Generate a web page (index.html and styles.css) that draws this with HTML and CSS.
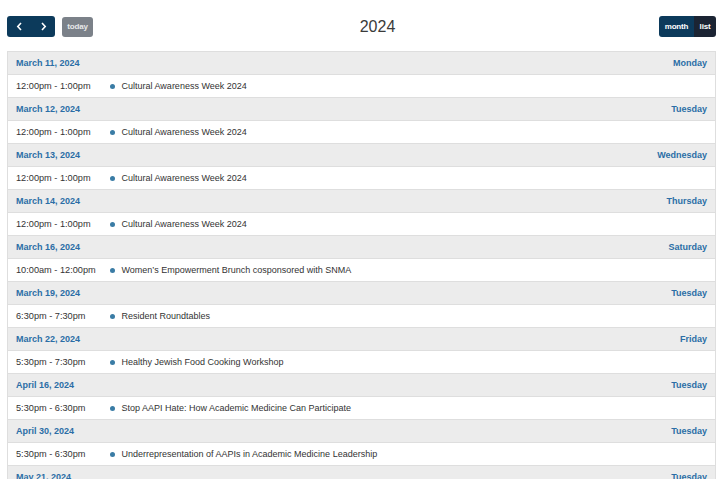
FILE: index.html
```html
<!DOCTYPE html>
<html>
<head>
<meta charset="utf-8">
<link rel="stylesheet" href="styles.css">
</head>
<body>
<div class="cal">
  <div class="toolbar">
    <div class="left">
      <div class="btn-group">
        <button class="btn nav" aria-label="prev"><svg width="7" height="9" viewBox="0 0 7 9"><path d="M5 1 L1.8 4.5 L5 8" fill="none" stroke="#fff" stroke-width="1.6"/></svg></button>
        <button class="btn nav" aria-label="next"><svg width="7" height="9" viewBox="0 0 7 9"><path d="M2 1 L5.2 4.5 L2 8" fill="none" stroke="#fff" stroke-width="1.6"/></svg></button>
      </div>
      <button class="btn today">today</button>
    </div>
    <h2 class="title">2024</h2>
    <div class="right">
      <div class="btn-group">
        <button class="btn view">month</button>
        <button class="btn view active">list</button>
      </div>
    </div>
  </div>
  <table class="list">
    <colgroup><col class="c-time"><col class="c-dot"><col></colgroup>
    <tbody>
      <tr class="day"><td colspan="2">March 11, 2024</td><td class="dow">Monday</td></tr>
      <tr class="ev"><td class="time">12:00pm - 1:00pm</td><td class="dot"><span></span></td><td class="name">Cultural Awareness Week 2024</td></tr>
      <tr class="day"><td colspan="2">March 12, 2024</td><td class="dow">Tuesday</td></tr>
      <tr class="ev"><td class="time">12:00pm - 1:00pm</td><td class="dot"><span></span></td><td class="name">Cultural Awareness Week 2024</td></tr>
      <tr class="day"><td colspan="2">March 13, 2024</td><td class="dow">Wednesday</td></tr>
      <tr class="ev"><td class="time">12:00pm - 1:00pm</td><td class="dot"><span></span></td><td class="name">Cultural Awareness Week 2024</td></tr>
      <tr class="day"><td colspan="2">March 14, 2024</td><td class="dow">Thursday</td></tr>
      <tr class="ev"><td class="time">12:00pm - 1:00pm</td><td class="dot"><span></span></td><td class="name">Cultural Awareness Week 2024</td></tr>
      <tr class="day"><td colspan="2">March 16, 2024</td><td class="dow">Saturday</td></tr>
      <tr class="ev"><td class="time">10:00am - 12:00pm</td><td class="dot"><span></span></td><td class="name">Women’s Empowerment Brunch cosponsored with SNMA</td></tr>
      <tr class="day"><td colspan="2">March 19, 2024</td><td class="dow">Tuesday</td></tr>
      <tr class="ev"><td class="time">6:30pm - 7:30pm</td><td class="dot"><span></span></td><td class="name">Resident Roundtables</td></tr>
      <tr class="day"><td colspan="2">March 22, 2024</td><td class="dow">Friday</td></tr>
      <tr class="ev"><td class="time">5:30pm - 7:30pm</td><td class="dot"><span></span></td><td class="name">Healthy Jewish Food Cooking Workshop</td></tr>
      <tr class="day"><td colspan="2">April 16, 2024</td><td class="dow">Tuesday</td></tr>
      <tr class="ev"><td class="time">5:30pm - 6:30pm</td><td class="dot"><span></span></td><td class="name">Stop AAPI Hate: How Academic Medicine Can Participate</td></tr>
      <tr class="day"><td colspan="2">April 30, 2024</td><td class="dow">Tuesday</td></tr>
      <tr class="ev"><td class="time">5:30pm - 6:30pm</td><td class="dot"><span></span></td><td class="name">Underrepresentation of AAPIs in Academic Medicine Leadership</td></tr>
      <tr class="day"><td colspan="2">May 21, 2024</td><td class="dow">Tuesday</td></tr>
    </tbody>
  </table>
</div>
</body>
</html>
```
FILE: styles.css
```css
html, body {
  margin: 0;
  padding: 0;
  background: #fff;
  overflow: hidden;
}
body {
  font-family: "Liberation Sans", Arial, sans-serif;
  color: #333;
}
.cal {
  padding: 16px 4px 0 7px;
}
.toolbar {
  display: flex;
  align-items: center;
  justify-content: space-between;
  height: 21px;
  margin-bottom: 14px;
}
.left, .right {
  display: flex;
  align-items: center;
  gap: 7px;
  width: 120px;
}
.right {
  justify-content: flex-end;
}
.btn-group {
  display: flex;
  border-radius: 3px;
  overflow: hidden;
}
.btn {
  border: 0;
  margin: 0;
  padding: 0;
  font-family: "Liberation Sans", Arial, sans-serif;
  font-size: 8px;
  font-weight: bold;
  letter-spacing: -0.2px;
  color: #fff;
  height: 21px;
  display: flex;
  align-items: center;
  justify-content: center;
  cursor: pointer;
}
.nav {
  width: 24px;
  background: #0c3a5b;
}
.today {
  width: 31px;
  height: 20px;
  background: #7b8189;
  color: #e6e8ea;
  border-radius: 3px;
}
.view {
  background: #0c3a5b;
  width: 35px;
}
.view.active {
  background: #1b2433;
  width: 22px;
}
.title {
  margin: 0;
  font-size: 16px;
  font-weight: normal;
  color: #3a3a3a;
  font-family: "Liberation Sans", Arial, sans-serif;
  transform: translateX(16px);
}
.list {
  width: 100%;
  table-layout: fixed;
  border-collapse: collapse;
  border: 1px solid #dedede;
  font-size: 9.2px;
}
.c-time {
  width: 102px;
}
.c-dot {
  width: 5px;
}
.list td {
  height: 22px;
  padding: 0 8px;
  border-bottom: 1px solid #dedede;
  vertical-align: middle;
  white-space: nowrap;
}
.day td {
  background: #ececec;
  color: #2b6ea6;
  font-weight: bold;
  font-size: 9px;
}
.day .dow {
  text-align: right;
}
.ev td {
  background: #fff;
  color: #333;
}
.ev .dot {
  padding: 0;
}
.dot span {
  display: block;
  width: 5px;
  height: 5px;
  border-radius: 50%;
  background: #3a7ca5;
}
.ev .name {
  padding-left: 7px;
  font-size: 9px;
}
```
